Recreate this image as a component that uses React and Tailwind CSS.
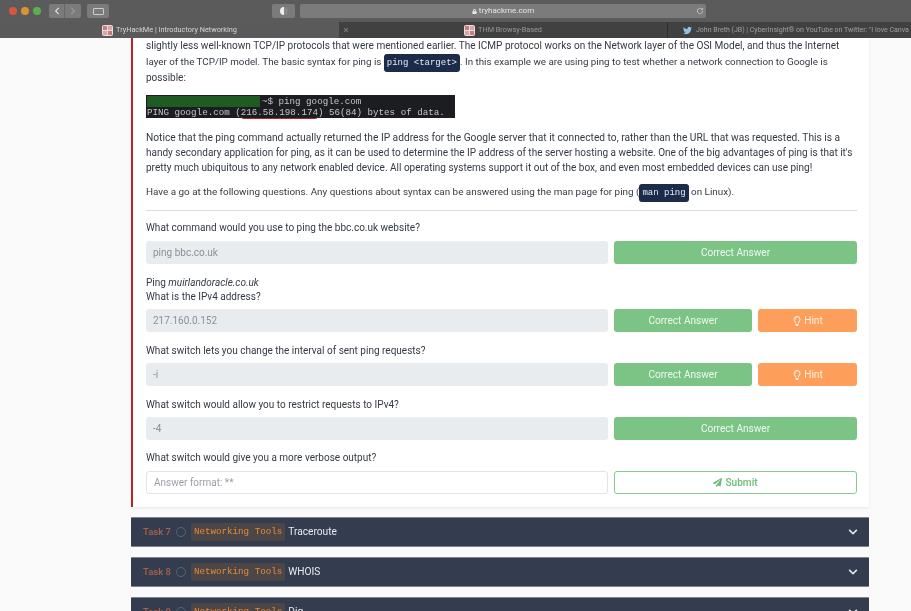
import React from "react";
import { FaChevronDown, FaChevronLeft, FaChevronRight, FaRegLightbulb, FaPaperPlane, FaTwitter, FaLock, FaTimes } from "react-icons/fa";

const sans = "font-['Roboto','Noto_Sans',sans-serif]";
const mono = "font-['Liberation_Mono',monospace]";

function Correct({ wide }) {
  return (
    <button className={`h-[23px] rounded-[3px] bg-[#7cc486] text-[10.1px] text-[#eef8ef] ${wide ? "w-[243px]" : "w-[138px]"}`}>
      Correct Answer
    </button>
  );
}

function Hint() {
  return (
    <button className="flex h-[23px] w-[99px] items-center justify-center gap-[2px] rounded-[3px] bg-[#fd9e5b] text-[10.1px] text-[#fdeee0]">
      <FaRegLightbulb className="h-[10px] w-[10px]" />
      Hint
    </button>
  );
}

function Answer({ value, hint }) {
  return (
    <div className="flex gap-[6px]">
      <div className="flex h-[23px] w-[462px] items-center rounded-[3px] bg-[#e9ecef] pl-[7px] text-[10px] text-[#8b9097]">{value}</div>
      {hint ? (
        <>
          <Correct />
          <Hint />
        </>
      ) : (
        <Correct wide />
      )}
    </div>
  );
}

function Code({ children }) {
  return <code className={`${mono} rounded-[3px] bg-[#1c2b4a] px-[3px] py-[4px] text-[9px] leading-none text-[#e6e9ef]`}>{children}</code>;
}

function Favicon() {
  return (
    <span className="grid h-[11px] w-[11px] shrink-0 grid-cols-2 gap-[1px] rounded-[2px] bg-[#e9dcdc] p-[1px]">
      <span className="bg-[#c77d7d]" />
      <span className="bg-[#d9a5a5]" />
      <span className="bg-[#d9a5a5]" />
      <span className="bg-[#c77d7d]" />
    </span>
  );
}

function TaskBar({ n, name }) {
  return (
    <div className="flex h-[30px] shrink-0 items-center rounded-[1px] border-y border-[#7d8490] bg-[#343d50] pl-[12px] pr-[11px]">
      <span className="w-[28px] whitespace-nowrap text-[9.5px] font-medium text-[#a8604a]">Task {n}</span>
      <span className="ml-[5px] h-[10px] w-[10px] rounded-full border border-[#596275]" />
      <span className={`${mono} ml-[5px] rounded-[2px] bg-[#4d4647] px-[3px] py-[2px] text-[9.2px] text-[#e88a3a]`}>Networking Tools</span>
      <span className="ml-[3px] text-[10.2px] text-[#e8eaee]">{name}</span>
      <FaChevronDown className="ml-auto h-[10px] w-[10px] text-[#e4e6ea]" />
    </div>
  );
}

export default function App() {
  return (
    <div className={`${sans} flex h-[611px] w-[911px] flex-col overflow-hidden bg-white blur-[0.4px]`}>
      <header className="h-[38px] shrink-0 bg-[#565656]">
        <div className="flex h-[22px] items-center bg-[#5b5b5b] pl-[9px]">
          <span className="h-[8px] w-[8px] rounded-full bg-[#d9553f]" />
          <span className="ml-[4px] h-[8px] w-[8px] rounded-full bg-[#d9952f]" />
          <span className="ml-[4px] h-[8px] w-[8px] rounded-full bg-[#5fae4e]" />
          <div className="ml-[8px] flex h-[14px] w-[32px] rounded-[2px] bg-[#7b7b7b]">
            <span className="flex w-[16px] items-center justify-center border-r border-[#666]"><FaChevronLeft className="h-[8px] w-[8px] text-[#ddd]" /></span>
            <span className="flex w-[16px] items-center justify-center"><FaChevronRight className="h-[8px] w-[8px] text-[#999]" /></span>
          </div>
          <div className="ml-[6px] flex h-[14px] w-[22px] items-center justify-center rounded-[2px] bg-[#7b7b7b]">
            <span className="h-[7px] w-[11px] rounded-[1px] border border-[#ccc]" />
          </div>
          <div className="ml-[163px] flex h-[14px] w-[23px] items-center justify-center rounded-[2px] bg-[#7b7b7b]">
            <span className="h-[8px] w-[8px] rounded-full bg-[linear-gradient(90deg,#eee_50%,#888_50%)]" />
          </div>
          <div className="relative ml-[5px] flex h-[14px] w-[406px] items-center justify-center rounded-[2px] bg-[#7b7b7b] text-[8px] text-[#e6e6e6]">
            <FaLock className="mr-[2px] h-[5px] w-[5px]" />
            tryhackme.com
            <svg className="absolute right-[2px] top-[3px] h-[8px] w-[8px]" viewBox="0 0 24 24" fill="none" stroke="#ccc" strokeWidth="2.5"><path d="M20 12a8 8 0 1 1-3-6.2M20 3v5h-5" /></svg>
          </div>
        </div>
        <div className="flex h-[16px] text-[7.3px] text-[#c4c4c4]">
          <div className="flex w-[339px] items-center justify-center gap-[3px] bg-[#5a5a5a] text-[#d6d6d6]">
            <Favicon />
            TryHackMe | Introductory Networking
          </div>
          <div className="relative flex w-[328px] items-center justify-center gap-[3px] bg-[#414141] text-[#999]">
            <FaTimes className="absolute left-[4px] top-[5px] h-[6px] w-[6px] text-[#777]" />
            <Favicon />
            THM Browsy-Based
          </div>
          <div className="flex flex-1 items-center gap-[4px] overflow-hidden whitespace-nowrap border-l border-[#2f2f2f] bg-[#414141] pl-[15px] text-[7px] text-[#a0a0a0]">
            <FaTwitter className="h-[9px] w-[9px] shrink-0 text-[#8fc1e8]" />
            <span>John Breth (JB) | CyberInsight® on YouTube on Twitter: "I love Canva</span>
          </div>
        </div>
      </header>

      <main className="flex flex-1 flex-col gap-[10px] overflow-hidden bg-[#fafafa] pl-[131px] pr-[42px]">
        <section className="h-[469px] shrink-0 border-l-[2px] border-[#b3262a] bg-white pl-[13px] pr-[12px] text-[#343a43] shadow-[0_1px_2px_rgba(0,0,0,0.08)]">
          <div className="whitespace-nowrap text-[10px] leading-[16px]">
            <p>
              <span className="text-[10.05px]">slightly less well-known TCP/IP protocols that were mentioned earlier. The ICMP protocol works on the Network layer of the OSI Model, and thus the Internet</span>
              <br />
              <span className="text-[9.8px]">layer of the TCP/IP model. The basic syntax for ping is <Code>ping &lt;target&gt;</Code>. In this example we are using ping to test whether a network connection to Google is</span>
              <br />
              possible:
            </p>
            <div className={`${mono} mt-[9px] h-[23px] w-[309px] bg-[#1b1d20] pl-[1px] pt-[1px] text-[9.2px] leading-[11px] text-[#c4c6c8]`}>
              <div className="flex">
                <span className="h-[11px] w-[113px] bg-[#1f5c24]" />
                <span className="ml-[2px]">~$ ping google.com</span>
              </div>
              <div>
                PING google.com (<span className="rounded-[3px] border-b border-[#b3262a]">216.58.198.174</span>) 56(84) bytes of data.
              </div>
            </div>
            <p className="mt-[12px] leading-[15px]">
              <span className="text-[10.2px]">Notice that the ping command actually returned the IP address for the Google server that it connected to, rather than the URL that was requested. This is a</span>
              <br />
              handy secondary application for ping, as it can be used to determine the IP address of the server hosting a website. One of the big advantages of ping is that it's
              <br />
              pretty much ubiquitous to any network enabled device. All operating systems support it out of the box, and even most embedded devices can use ping!
            </p>
            <p className="mt-[9px] text-[9.9px] leading-[16px]">
              Have a go at the following questions. Any questions about syntax can be answered using the man page for ping (<Code>man ping</Code> on Linux).
            </p>
          </div>
          <hr className="mt-[10px] border-t border-[#dcdcdc]" />

          <p className="mt-[9px] h-[16px] text-[10px] leading-[16px]">What command would you use to ping the bbc.co.uk website?</p>
          <div className="mt-[5px]"><Answer value="ping bbc.co.uk" /></div>

          <p className="mt-[12px] text-[10px] leading-[14px]">Ping <em>muirlandoracle.co.uk</em></p>
          <p className="text-[10px] leading-[14px]">What is the IPv4 address?</p>
          <div className="mt-[5px]"><Answer value="217.160.0.152" hint /></div>

          <p className="mt-[11px] h-[16px] text-[10px] leading-[16px]">What switch lets you change the interval of sent ping requests?</p>
          <div className="mt-[4px]"><Answer value="-i" hint /></div>

          <p className="mt-[11px] h-[16px] text-[10px] leading-[16px]">What switch would allow you to restrict requests to IPv4?</p>
          <div className="mt-[4px]"><Answer value="-4" /></div>

          <p className="mt-[10px] h-[16px] text-[10px] leading-[16px]">What switch would give you a more verbose output?</p>
          <div className="mt-[5px] flex gap-[6px]">
            <div className="flex h-[23px] w-[462px] items-center rounded-[3px] border border-[#e2e4e8] bg-white pl-[7px] text-[10px] text-[#9a9ea5]">Answer format: **</div>
            <button className="flex h-[23px] w-[243px] items-center justify-center gap-[3px] rounded-[3px] border border-[#86cb90] bg-white text-[10.1px] font-medium text-[#6cbd78]">
              <FaPaperPlane className="h-[9px] w-[9px]" />
              Submit
            </button>
          </div>
        </section>
        <TaskBar n={7} name="Traceroute" />
        <TaskBar n={8} name="WHOIS" />
        <TaskBar n={9} name="Dig" />
      </main>
    </div>
  );
}
